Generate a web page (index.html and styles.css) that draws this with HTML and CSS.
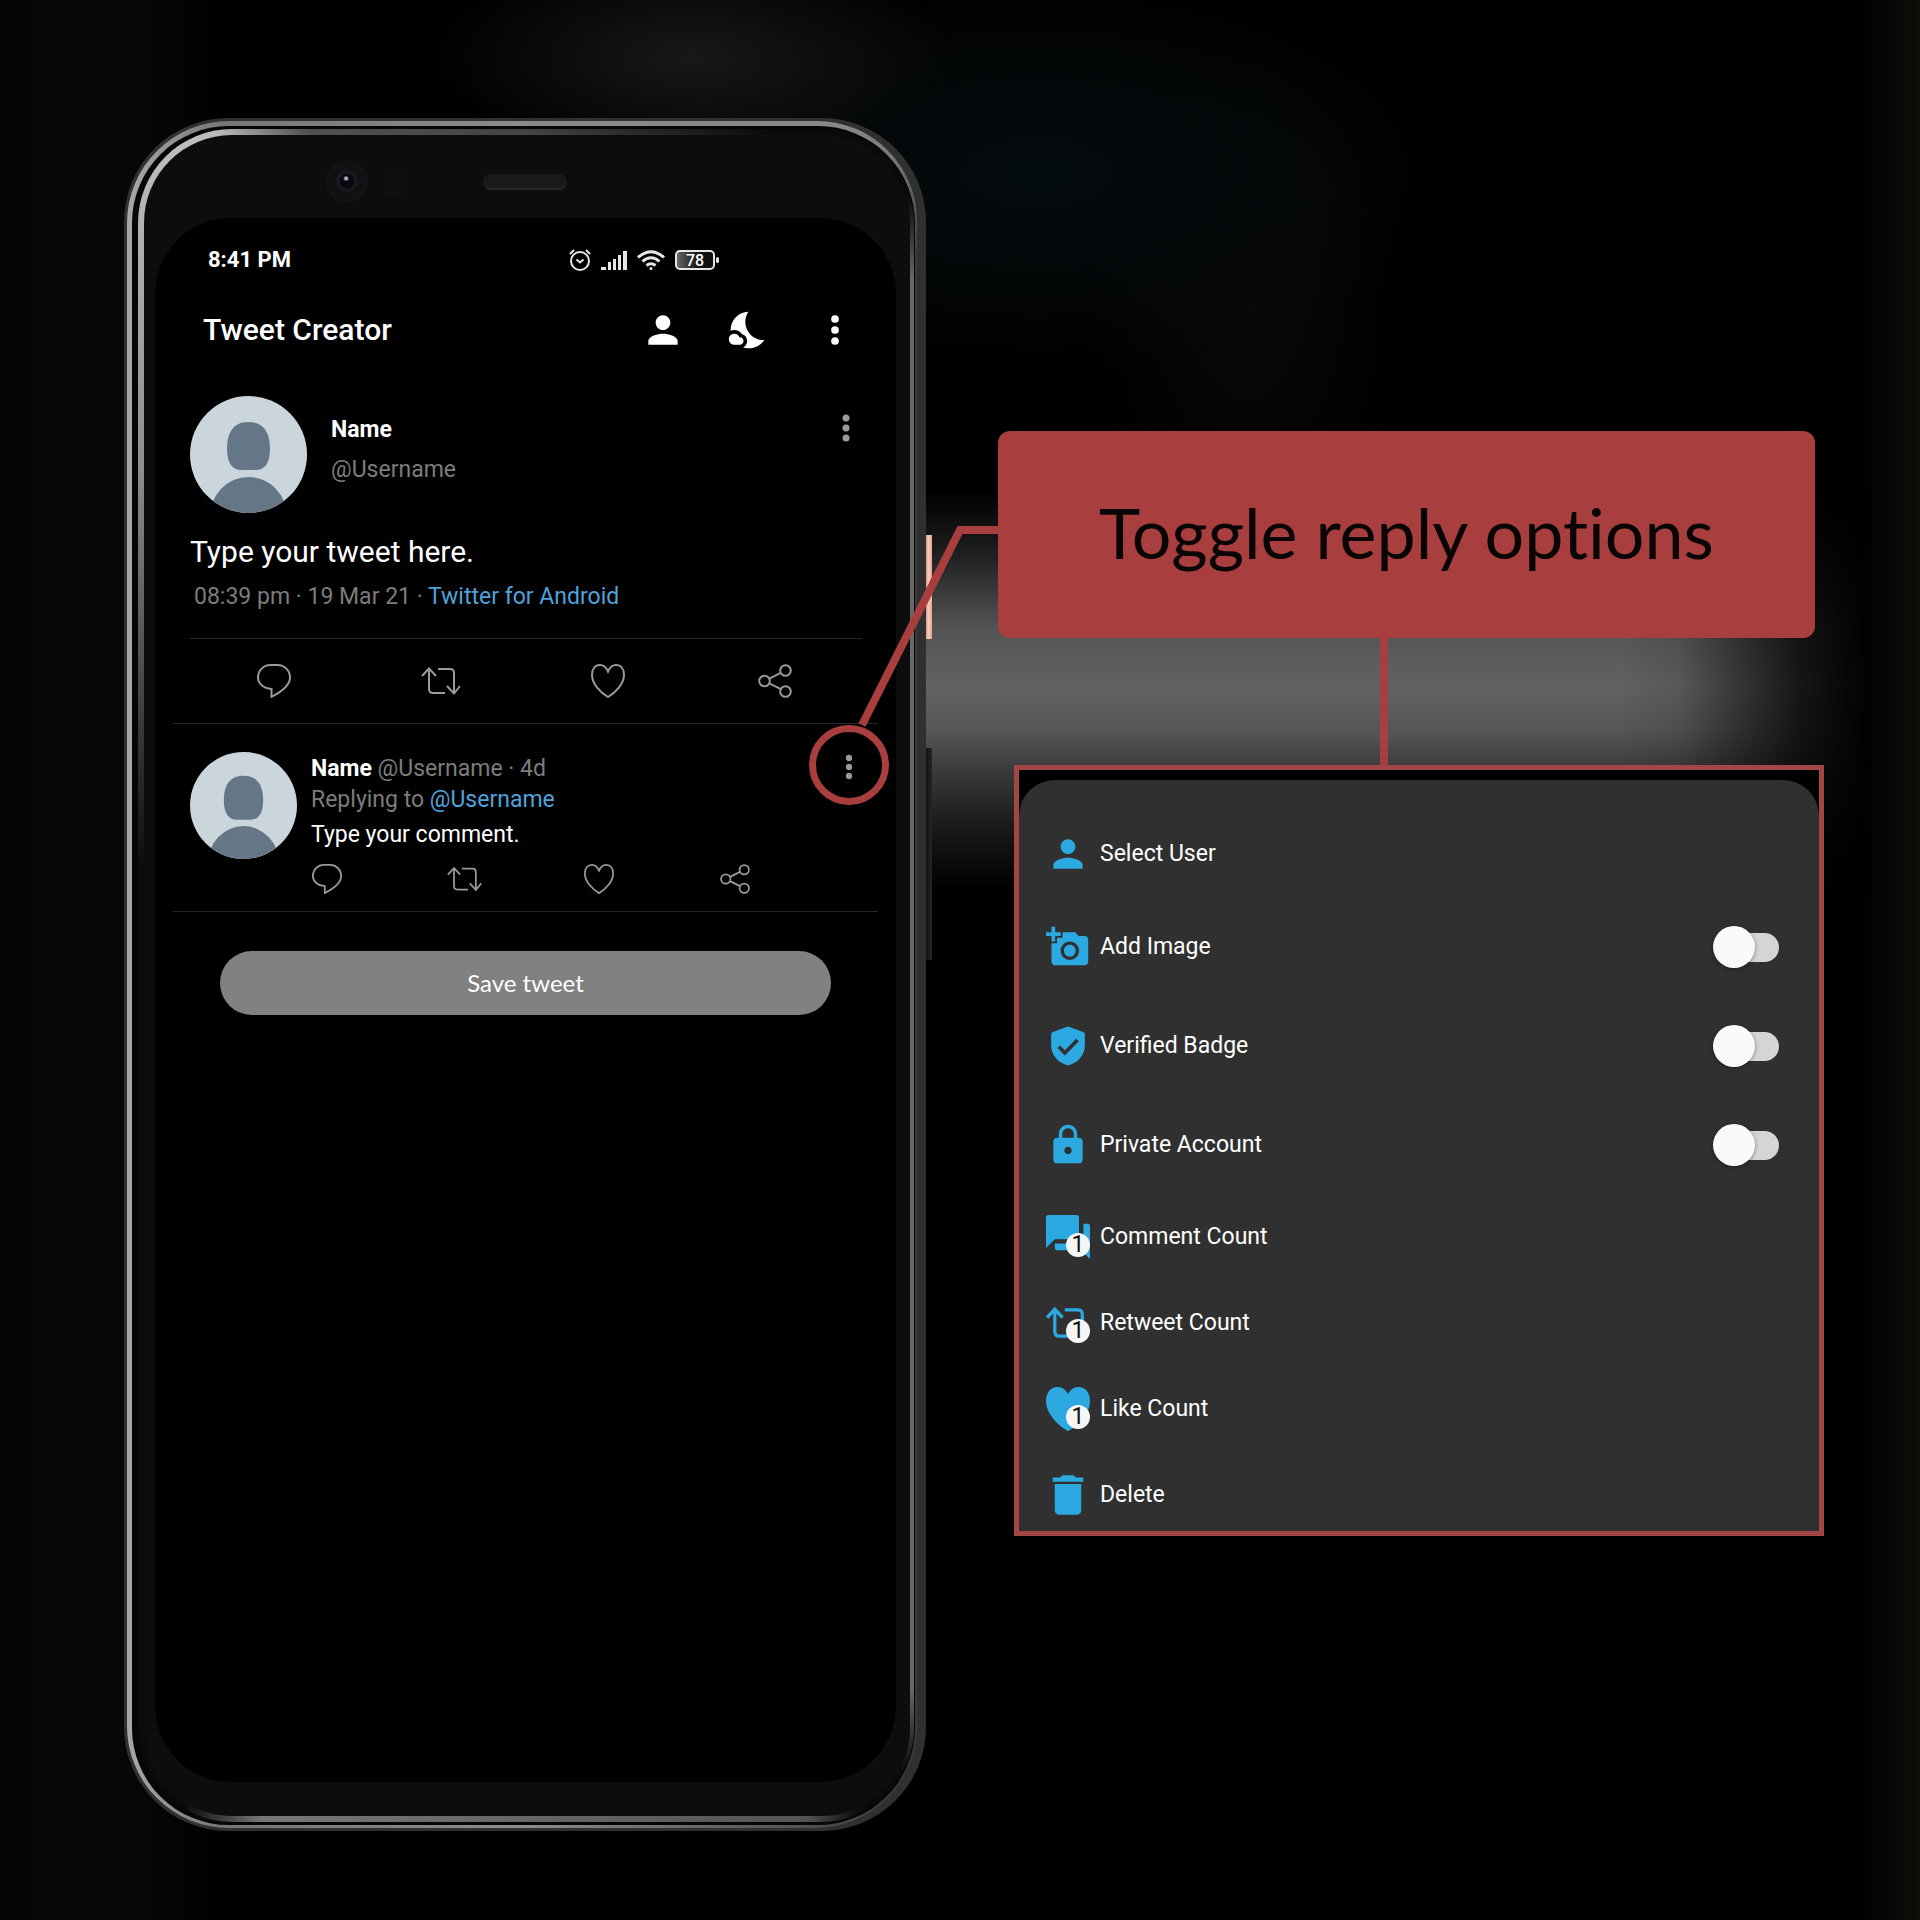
FILE: index.html
```html
<!DOCTYPE html>
<html lang="en">
<head>
<meta charset="utf-8">
<meta name="viewport" content="width=device-width, initial-scale=1">
<title>Tweet Creator – reply options</title>
<link rel="stylesheet" href="styles.css">
</head>
<body>
<svg class="defs" aria-hidden="true">
  <symbol id="person" viewBox="0 0 24 24"><path d="M12 12c2.210 0 4-1.790 4-4s-1.790-4-4-4-4 1.790-4 4 1.790 4 4 4zm0 2c-2.670 0-8 1.340-8 4v2h16v-2c0-2.660-5.330-4-8-4z"/></symbol>
  <symbol id="more" viewBox="0 0 24 24"><circle cx="12" cy="6" r="2.1"/><circle cx="12" cy="12" r="2.1"/><circle cx="12" cy="18" r="2.1"/></symbol>
  <symbol id="comment" viewBox="0 0 34 34"><path d="M14.500 25C6.500 24.500 1 19.500 1 13.500 1 6.500 6.500 1 13.500 1h7C27.500 1 33 6.500 33 13.500 33 21 25 27.500 14.500 32.800z"/></symbol>
  <symbol id="retweet" viewBox="0 0 40 34"><path d="M1 12l7-7.500 7 7.500M8 5v20q0 4 4 4h12M17 5h12q4 0 4 4v20M26 22l7 7.500 6-7.500"/></symbol>
  <symbol id="heart" viewBox="0 0 34 34"><path d="M17 7.500C15 3 12 1 9 1 4 1 1 5 1 11 1 20 10 29 17 33 24 29 33 20 33 11 33 5 30 1 25 1 22 1 19 3 17 7.500z"/></symbol>
  <symbol id="share" viewBox="0 0 34 34"><circle cx="6.500" cy="17" r="5.300"/><circle cx="27.500" cy="6.500" r="5.300"/><circle cx="27.500" cy="27.500" r="5.300"/><path d="M11.300 14.600l11.500-5.700M11.300 19.400l11.500 5.700"/></symbol>
  <symbol id="avatar" viewBox="0 0 117 117"><clipPath id="disc"><circle cx="58.500" cy="58.500" r="58.500"/></clipPath><g clip-path="url(#disc)"><path fill="#cbd6dc" d="M0 0h117v117H0z"/><path fill="#657786" d="M58.500 26C74 26 80 37 80 53 80 68 74 74 66 74H51C43 74 37 68 37 53 37 37 43 26 58.500 26z"/><ellipse fill="#657786" cx="58.500" cy="122" rx="39" ry="41"/></g></symbol>
</svg>

<div class="backdrop" aria-hidden="true"><div class="beam"></div></div>

<main class="stage">
  <div class="phone">
    <div class="power-key"></div>
    <div class="volume-key"></div>
    <div class="rim"><div class="groove"><div class="bevel"><div class="face">
      <div class="sensors"><div class="camera"></div><div class="sensor"></div><div class="earpiece"></div></div>
      <div class="screen">
        <div class="status">
          <time>8:41 PM</time>
          <div class="status-icons">
            <svg width="22" height="22" viewBox="0 0 22 22" fill="none" stroke="#e6e6e6" stroke-width="2"><circle cx="11" cy="12" r="9"/><path d="M7.500 10.500l3.500 3 3.500-3M1 5l4-4M21 5l-4-4"/></svg>
            <svg width="26" height="20" viewBox="0 0 26 20" fill="#e6e6e6"><path d="M0 17h5v3H0zM7 12h3v8H7zM12 9h3v11h-3zM17 5h3v15h-3zM22 1h4v19h-4z"/></svg>
            <svg width="28" height="20" viewBox="0 0 28 20" fill="none" stroke="#e6e6e6" stroke-width="3"><path d="M1 7.500Q14-4 27 7.500M5.500 11.500Q14 4 22.500 11.500M9.500 15.500Q14 12 18.500 15.500"/><circle cx="14" cy="18.500" r="1.500" fill="#e6e6e6" stroke="none"/></svg>
            <div class="battery">78</div>
          </div>
        </div>

        <header class="app-bar">
          <h1>Tweet Creator</h1>
          <button class="icon-button" aria-label="Profile"><svg><use href="#person"/></svg></button>
          <button class="icon-button" aria-label="Night mode"><svg viewBox="0 0 24 24"><path d="M11.100 12.080C8.770 7.570 10.600 3.600 11.630 2.010 6.270 2.200 1.980 6.590 1.980 12c0 .14.02.28.02.42C2.620 12.150 3.290 12 4 12c1.660 0 3.180.83 4.100 2.150C9.770 14.630 11 16.170 11 18c0 1.520-.87 2.830-2.120 3.510.98.32 2.030.5 3.110.5 3.500 0 6.580-1.800 8.370-4.520C18 17.720 13.380 16.520 11.100 12.080z"/><path d="M7 16h-.18C6.400 14.840 5.300 14 4 14c-1.660 0-3 1.340-3 3s1.340 3 3 3h3c1.100 0 2-.9 2-2s-.9-2-2-2z"/></svg></button>
          <button class="icon-button" aria-label="More"><svg><use href="#more"/></svg></button>
        </header>

        <article class="tweet">
          <div class="tweet-head">
            <svg class="avatar-large" role="img" aria-label="Avatar"><use href="#avatar"/></svg>
            <div class="author"><strong>Name</strong><span>@Username</span></div>
            <button class="icon-button muted" aria-label="Tweet options"><svg><use href="#more"/></svg></button>
          </div>
          <p class="tweet-text">Type your tweet here.</p>
          <p class="meta">08:39 pm · 19 Mar 21 · <a href="#source">Twitter for Android</a></p>
          <div class="actions">
            <button aria-label="Comment"><svg><use href="#comment"/></svg></button>
            <button aria-label="Retweet"><svg class="wide"><use href="#retweet"/></svg></button>
            <button aria-label="Like"><svg><use href="#heart"/></svg></button>
            <button aria-label="Share"><svg><use href="#share"/></svg></button>
          </div>
        </article>

        <article class="reply">
          <svg class="avatar-small" role="img" aria-label="Avatar"><use href="#avatar"/></svg>
          <div class="reply-body">
            <p><strong>Name</strong> @Username · 4d</p>
            <p>Replying to <a href="#user">@Username</a></p>
            <p class="reply-text">Type your comment.</p>
            <div class="reply-actions">
              <button aria-label="Comment"><svg><use href="#comment"/></svg></button>
              <button aria-label="Retweet"><svg class="wide"><use href="#retweet"/></svg></button>
              <button aria-label="Like"><svg><use href="#heart"/></svg></button>
              <button aria-label="Share"><svg><use href="#share"/></svg></button>
            </div>
          </div>
          <button class="icon-button muted small highlighted" aria-label="Reply options"><svg><use href="#more"/></svg></button>
        </article>

        <button class="save">Save tweet</button>
      </div>
    </div></div></div></div>
  </div>

  <section class="guide">
    <div class="callout">
      <svg class="leader" width="140" height="206" viewBox="0 0 140 206" aria-hidden="true"><path d="M140 8H102L4 203"/></svg>
      <h2>Toggle reply options</h2>
    </div>
    <div class="stem"></div>
    <div class="panel">
      <ul class="menu">
        <li><button class="row"><svg class="icon"><use href="#person"/></svg>Select User</button></li>
        <li><label class="row tall"><svg class="icon" viewBox="0 0 24 24"><path d="M3 4V1h2v3h3v2H5v3H3V6H0V4h3zm3 6V7h3V4h7l1.830 2H21c1.100 0 2 .9 2 2v12c0 1.100-.9 2-2 2H5c-1.100 0-2-.9-2-2V10h3zm7 9c2.760 0 5-2.240 5-5s-2.240-5-5-5-5 2.240-5 5 2.240 5 5 5zm-3.200-5c0 1.770 1.430 3.200 3.200 3.200s3.200-1.430 3.200-3.200-1.430-3.200-3.200-3.200-3.200 1.430-3.200 3.200z"/></svg>Add Image<input type="checkbox" role="switch" class="switch"></label></li>
        <li><label class="row tall"><svg class="icon" viewBox="0 0 24 24"><path d="M12 1.300L3.700 4.300Q2.800 4.700 2.800 5.700V11.500C2.800 17 6.500 21.200 12 22.700 17.500 21.200 21.200 17 21.200 11.500V5.700Q21.200 4.700 20.300 4.300z"/><path class="tick" d="M7 12.400l3.300 3.300 6.900-7"/></svg>Verified Badge<input type="checkbox" role="switch" class="switch"></label></li>
        <li><label class="row tall"><svg class="icon" viewBox="0 0 24 24"><path d="M18 8h-1V6c0-2.760-2.240-5-5-5S7 3.240 7 6v2H6c-1.100 0-2 .9-2 2v10c0 1.100.9 2 2 2h12c1.100 0 2-.9 2-2V10c0-1.100-.9-2-2-2zm-6 9c-1.100 0-2-.9-2-2s.9-2 2-2 2 .9 2 2-.9 2-2 2zm3.100-9H8.900V6c0-1.710 1.390-3.100 3.100-3.100s3.100 1.390 3.100 3.100v2z"/></svg>Private Account<input type="checkbox" role="switch" class="switch"></label></li>
        <li><button class="row"><span class="counted"><svg class="icon" viewBox="2 2 20 20"><path d="M21 6h-2v9H6v2c0 .55.45 1 1 1h11l4 4V7c0-.55-.45-1-1-1zm-4 6V3c0-.55-.45-1-1-1H3c-.55 0-1 .45-1 1v14l4-4h10c.55 0 1-.45 1-1z"/></svg><span class="count">1</span></span>Comment Count</button></li>
        <li><button class="row"><span class="counted"><svg class="icon line"><use href="#retweet"/></svg><span class="count">1</span></span>Retweet Count</button></li>
        <li><button class="row"><span class="counted"><svg class="icon solid"><use href="#heart"/></svg><span class="count">1</span></span>Like Count</button></li>
        <li><button class="row"><svg class="icon" viewBox="2 2 20 20"><path d="M6 19c0 1.100.9 2 2 2h8c1.100 0 2-.9 2-2V7H6v12zM19 4h-3.500l-1-1h-5l-1 1H5v2h14V4z"/></svg>Delete</button></li>
      </ul>
    </div>
  </section>
</main>
</body>
</html>
```
FILE: styles.css
```css
:root {
  --accent: #a83f3e;
  --blue: #2ba9e0;
  --link: #4fa3db;
  --muted: #7c7c7c;
  --rule: #262626;
}

* { box-sizing: border-box; margin: 0; padding: 0; }

body {
  position: relative;
  min-height: 100vh;
  background: #000;
  color: #fff;
  font: 23px/28px Roboto, "Liberation Sans", sans-serif;
}

button {
  border: 0;
  background: none;
  color: inherit;
  font: inherit;
  cursor: pointer;
}

a { color: var(--link); text-decoration: none; }
svg { display: block; flex: none; }
.defs { position: absolute; width: 0; height: 0; }

/* Out-of-focus light behind the phone */
.backdrop {
  position: absolute;
  inset: 0;
  overflow: hidden;
  background:
    radial-gradient(260px 110px at 36% 3%, #181818, transparent),
    radial-gradient(420px 200px at 54% 9%, #050c0f, transparent),
    radial-gradient(160px 260px at 65% 16%, #080808, transparent),
    linear-gradient(90deg, transparent 97%, #0e0e0a 100%),
    linear-gradient(90deg, #040404, #080808 6%, transparent 12%);
}

.beam {
  position: absolute;
  top: 490px;
  left: 45%;
  right: 2%;
  height: 400px;
  background: linear-gradient(#000, #1c1c1c 15%, #555 35%, #626262 49%, #565656 60%, #383838 71%, #1a1a1a 84%, #000);
  mask-image: linear-gradient(90deg, #000 74%, rgb(0 0 0 / 90%) 80%, rgb(0 0 0 / 55%) 86%, rgb(0 0 0 / 22%) 92%, transparent 99%);
}

.stage {
  position: relative;
  display: grid;
  grid-template-columns: 802fr 826fr;
  align-items: start;
  gap: 72px;
  padding: 118px 96px 88px 124px;
}

/* Phone body, from the outside in */
.phone {
  position: relative;
  display: flex;
  aspect-ratio: 802 / 1713;
  padding: 3px 9px 3px 3px;
  border-radius: 104px;
  background: #303030;
}

.power-key, .volume-key { position: absolute; left: 100%; width: 6px; }
.power-key { top: 417px; height: 104px; background: linear-gradient(90deg, #d99d90, #fbc9bc 40%, #e3a797); }
.volume-key { top: 630px; height: 212px; background: linear-gradient(90deg, #111, #262626); }

.rim, .groove, .bevel, .face { display: flex; flex: 1; min-width: 0; }

.rim {
  padding: 5px 2px 3px 5px;
  border-radius: 102px 100px 102px 102px;
  background:
    linear-gradient(#8a8a8a, transparent 8%) right / 50% 100% no-repeat,
    linear-gradient(90deg, #a8a8a8, #767676 12%, #8c8c8c 50%, #3a3a3a);
}

.groove {
  padding: 3px 1px 3px 6px;
  border-radius: 97px;
  background: #060606;
}

.bevel {
  padding: 6px 4px 6px 6px;
  border-radius: 94px;
  background:
    linear-gradient(#c0c0c0, #8e8e8e 20%, transparent 44%) left / 60px 100% no-repeat,
    linear-gradient(transparent 4%, #6a6a6a 9%, #6a6a6a 92%, transparent 97%) right / 40px 100% no-repeat,
    linear-gradient(90deg, #bcbcbc 10%, #505050 22%, #444 50%, transparent 82%) top / 100% 60px no-repeat,
    linear-gradient(90deg, transparent 6%, #777 16%, #555 86%, transparent 93%) bottom / 100% 50px no-repeat,
    #0a0a0a;
}

.face {
  flex-direction: column;
  padding: 0 14px 34px 11px;
  border-radius: 88px;
  background: #0d0d0d;
}

.sensors {
  display: flex;
  align-items: center;
  height: 83px;
  padding: 10px 0 0 170px;
}

.camera {
  width: 44px;
  height: 44px;
  border-radius: 50%;
  background:
    radial-gradient(circle at 48% 42%, #b8b8d8 0 1px, transparent 3px),
    radial-gradient(circle at 50% 48%, #080810 0 6px, #1c1c24 9px, #101010 12px, #131313 20px, #0e0e0e 22px);
}

.sensor { width: 20px; height: 28px; margin-left: 16px; background: #0f0f0f; }

.earpiece {
  width: 84px;
  height: 16px;
  margin-left: 78px;
  border-radius: 8px;
  border-bottom: 2px solid #262626;
  background: #191919;
}

.screen {
  flex: 1;
  padding-top: 22px;
  border-radius: 76px;
  background: #000;
}

.status {
  display: flex;
  align-items: center;
  justify-content: space-between;
  height: 40px;
  padding: 0 176px 0 53px;
  font-size: 22px;
  font-weight: 700;
}

.status-icons { display: flex; align-items: center; gap: 10px; }

.battery {
  position: relative;
  width: 40px;
  height: 20px;
  margin-right: 5px;
  border: 2px solid #e6e6e6;
  border-radius: 5px;
  background: linear-gradient(90deg, #666, #111 60%);
  font-size: 16px;
  font-weight: 500;
  line-height: 17px;
  text-align: center;
}

.battery::after {
  content: "";
  position: absolute;
  top: 5px;
  right: -6px;
  width: 3px;
  height: 6px;
  border-radius: 2px;
  background: #e6e6e6;
}

.app-bar {
  display: flex;
  align-items: center;
  gap: 42px;
  margin-top: 28px;
  padding: 0 39px 0 48px;
}

.app-bar h1 { flex: 1; font-size: 30px; font-weight: 500; line-height: 34px; }

.icon-button, .icon-button svg { position: relative; width: 44px; height: 44px; fill: #fff; }
.icon-button.muted svg { fill: #9a9a9a; }
.muted svg { padding: 2px; }
.small svg { padding: 4px; }

.tweet { padding: 44px 28px 0 35px; }
.tweet-head { display: flex; gap: 24px; align-items: flex-start; }
.avatar-large { width: 117px; height: 117px; }
.author { display: grid; flex: 1; gap: 12px; padding-top: 20px; color: var(--muted); }
strong { color: #fff; font-weight: 700; }
.tweet-head .icon-button { margin-top: 10px; }
.tweet-text { margin-top: 22px; font-size: 30px; line-height: 34px; }
.meta { margin-top: 14px; padding-left: 4px; color: var(--muted); }

.actions {
  display: grid;
  grid-template-columns: repeat(4, 1fr);
  align-items: center;
  height: 85px;
  margin: 27px 6px 0 0;
  padding-right: 4px;
  border-top: 1px solid var(--rule);
}

.actions button, .reply-actions button { display: grid; place-items: center; }
.actions svg, .reply-actions svg { width: 34px; height: 34px; fill: none; stroke: #9a9a9a; stroke-width: 2; overflow: visible; }
.actions .wide { width: 40px; }

.reply {
  display: flex;
  align-items: flex-start;
  margin: 0 18px;
  padding: 28px 7px 17px 17px;
  border: solid var(--rule);
  border-width: 1px 0;
  color: var(--muted);
}

.avatar-small { width: 107px; height: 107px; margin-right: 14px; }
.reply-body { display: grid; flex: 1; gap: 3px; padding-top: 3px; }
.reply-text { margin-top: 4px; color: #fff; }
.reply-actions { display: flex; justify-content: space-between; margin: 12px 76px 0 0; }
.reply-actions button { width: 32px; height: 30px; }
.reply-actions svg { width: 30px; height: 30px; }
.reply-actions .wide { width: 35px; }
.reply .icon-button { margin-top: -7px; }

.highlighted::after {
  content: "";
  position: absolute;
  inset: -20px -18px -16px;
  border: 7px solid var(--accent);
  border-radius: 50%;
}

.save {
  display: block;
  width: calc(100% - 130px);
  height: 64px;
  margin: 39px 65px 0;
  border-radius: 32px;
  background: #818181;
  font-family: Lato, "Open Sans", sans-serif;
  font-size: 24px;
}

/* Annotation beside the phone */
.guide { padding-top: 313px; }

.callout {
  position: relative;
  display: grid;
  place-items: center;
  min-height: 207px;
  margin-right: 9px;
  padding-bottom: 6px;
  border-radius: 12px;
  background: var(--accent);
}

.callout h2 {
  color: #0a0505;
  font: 400 70px/80px Lato, "Open Sans", sans-serif;
  font-variant-ligatures: none;
}

.leader { position: absolute; top: 91px; right: 100%; fill: none; stroke: var(--accent); stroke-width: 8; }
.stem { width: 8px; height: 127px; margin-left: 382px; background: var(--accent); }

.panel {
  margin-left: 16px;
  padding-top: 10px;
  border: 5px solid #a24745;
  background: #000;
}

.menu {
  display: grid;
  gap: 42px;
  padding: 52px 40px 14px 27px;
  border-radius: 36px 36px 0 0;
  background: #303030;
  list-style: none;
}

.row { display: flex; align-items: center; gap: 10px; width: 100%; height: 44px; line-height: 30px; }
.row.tall { height: 57px; }
.icon { width: 44px; height: 44px; fill: var(--blue); }
.icon.line { fill: none; stroke: var(--blue); stroke-width: 3; }
.icon.solid { stroke: var(--blue); stroke-width: 2; }
.tick { fill: none; stroke: #303030; stroke-width: 2; }
.counted { position: relative; }

.count {
  position: absolute;
  right: 0;
  bottom: 2px;
  width: 24px;
  height: 24px;
  border-radius: 50%;
  background: #f6f6f6;
  color: #111;
  line-height: 24px;
  text-align: center;
}

.switch {
  position: relative;
  appearance: none;
  width: 66px;
  height: 42px;
  margin-left: auto;
  cursor: pointer;
}

.switch::before, .switch::after { content: ""; position: absolute; }
.switch::before { inset: 7px 0 6px 10px; border-radius: 15px; background: #d5d5d5; }
.switch::after { top: 0; left: 0; width: 42px; height: 42px; border-radius: 50%; background: #fafafa; box-shadow: 0 1px 4px rgb(0 0 0 / 40%); }
.switch:checked::before { background: #1c6f94; }
.switch:checked::after { left: 24px; background: var(--blue); }
```
